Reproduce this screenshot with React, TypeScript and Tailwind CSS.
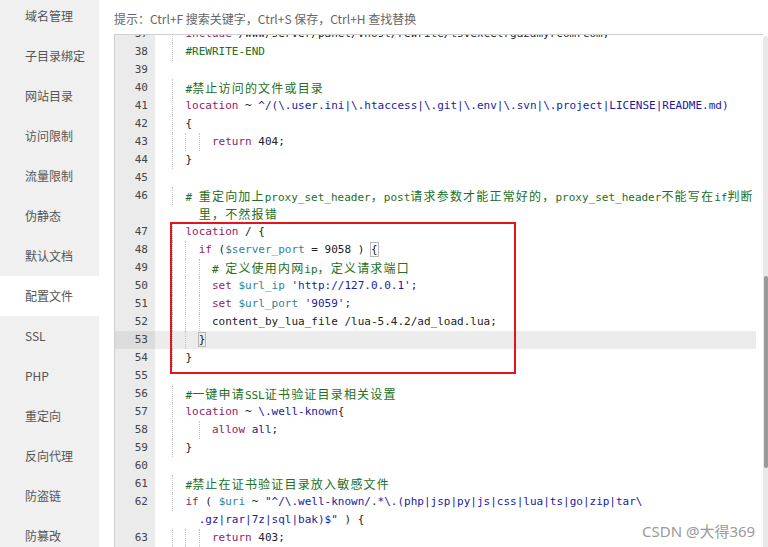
import React from "react";

type Tok = [string, string?];
type Row = { n?: number; indent: number; toks: Tok[]; guides: number[]; active?: boolean };

const COLORS: Record<string, string> = {
  k: "text-[#931a68]",
  c: "text-[#236e24]",
  s: "text-[#1a1aa6]",
  v: "text-[#318495]",
  t: "text-[#222]",
};

const rows: Row[] = [
  { n: 37, indent: 4, toks: [["include", "k"], [" /www/server/panel/vhost/rewrite/tsvexcelrgazdmyrcomrcom;"]], guides: [2] },
  { n: 38, indent: 4, toks: [["#REWRITE-END", "c"]], guides: [2] },
  { n: 39, indent: 0, toks: [], guides: [] },
  { n: 40, indent: 4, toks: [["#禁止访问的文件或目录", "c"]], guides: [2] },
  { n: 41, indent: 4, toks: [["location", "k"], [" ~ "], ["^/(\\.user.ini|\\.htaccess|\\.git|\\.env|\\.svn|\\.project|LICENSE|README.md)", "s"]], guides: [2] },
  { n: 42, indent: 4, toks: [["{"]], guides: [2] },
  { n: 43, indent: 8, toks: [["return", "k"], [" 404;"]], guides: [2, 4, 6] },
  { n: 44, indent: 4, toks: [["}"]], guides: [2] },
  { n: 45, indent: 0, toks: [], guides: [] },
  { n: 46, indent: 4, toks: [["# 重定向加上proxy_set_header，post请求参数才能正常好的，proxy_set_header不能写在if判断", "c"]], guides: [2] },
  { indent: 6, toks: [["里，不然报错", "c"]], guides: [] },
  { n: 47, indent: 4, toks: [["location", "k"], [" / {"]], guides: [2] },
  { n: 48, indent: 6, toks: [["if", "k"], [" ("], ["$server_port", "v"], [" = 9058 ) "], ["{", "b"]], guides: [2, 4] },
  { n: 49, indent: 8, toks: [["# 定义使用内网ip，定义请求端口", "c"]], guides: [2, 4, 6] },
  { n: 50, indent: 8, toks: [["set", "k"], [" "], ["$url_ip", "v"], [" "], ["'http://127.0.0.1'", "s"], [";"]], guides: [2, 4, 6] },
  { n: 51, indent: 8, toks: [["set", "k"], [" "], ["$url_port", "v"], [" "], ["'9059'", "s"], [";"]], guides: [2, 4, 6] },
  { n: 52, indent: 8, toks: [["content_by_lua_file /lua-5.4.2/ad_load.lua;"]], guides: [2, 4, 6] },
  { n: 53, indent: 6, toks: [["}", "b"]], guides: [2, 4], active: true },
  { n: 54, indent: 4, toks: [["}"]], guides: [2] },
  { n: 55, indent: 0, toks: [], guides: [] },
  { n: 56, indent: 4, toks: [["#一键申请SSL证书验证目录相关设置", "c"]], guides: [2] },
  { n: 57, indent: 4, toks: [["location", "k"], [" ~ "], ["\\.well-known", "s"], ["{"]], guides: [2] },
  { n: 58, indent: 8, toks: [["allow", "k"], [" "], ["all", "s"], [";"]], guides: [2, 6] },
  { n: 59, indent: 4, toks: [["}"]], guides: [2] },
  { n: 60, indent: 0, toks: [], guides: [] },
  { n: 61, indent: 4, toks: [["#禁止在证书验证目录放入敏感文件", "c"]], guides: [2] },
  { n: 62, indent: 4, toks: [["if", "k"], [" ( "], ["$uri", "v"], [" ~ "], ["\"^/\\.well-known/.*\\.(php|jsp|py|js|css|lua|ts|go|zip|tar\\", "s"]], guides: [2] },
  { indent: 6, toks: [[".gz|rar|7z|sql|bak)$\"", "s"], [" ) {"]], guides: [] },
  { n: 63, indent: 8, toks: [["return", "k"], [" 403;"]], guides: [2, 4, 6] },
  { n: 64, indent: 4, toks: [["}"]], guides: [2] },
];

const CW = 6.6;
const isWide = (ch: string) => /[\u2e80-\u9fff\uff00-\uffef\u3000-\u303f]/.test(ch);

function renderText(text: string, key: string) {
  const out: React.ReactNode[] = [];
  let buf = "";
  let i = 0;
  for (const ch of text) {
    if (isWide(ch)) {
      if (buf) {
        out.push(<span key={key + "-" + i++}>{buf}</span>);
        buf = "";
      }
      out.push(
        <span
          key={key + "-" + i++}
          className="inline-block w-[13.2px] text-[12px] leading-[18px] font-['Noto_Sans_CJK_SC',sans-serif]"
        >
          {ch}
        </span>
      );
    } else {
      buf += ch;
    }
  }
  if (buf) out.push(<span key={key + "-" + i++}>{buf}</span>);
  return out;
}

const sideItems = ["域名管理", "子目录绑定", "网站目录", "访问限制", "流量限制", "伪静态", "默认文档", "配置文件", "SSL", "PHP", "重定向", "反向代理", "防盗链", "防篡改"];

export default function App() {
  return (
    <div className="relative flex h-[547px] w-[768px] overflow-hidden bg-white">
      {/* sidebar */}
      <div className="w-[99px] shrink-0 overflow-hidden bg-[#f0f0f0]">
        <div className="-mt-[4px]">
          {sideItems.map((s) => (
            <div
              key={s}
              className={
                "flex h-[40px] items-center pl-[25px] text-[12px] text-[#555] font-['Noto_Sans_CJK_SC','Noto_Sans',sans-serif] " +
                (s === "配置文件" ? "bg-white" : "")
              }
            >
              {s}
            </div>
          ))}
        </div>
      </div>

      {/* main */}
      <div className="flex min-w-0 flex-1 flex-col pl-[15px]">
        <div className="flex h-[34px] shrink-0 items-center pt-[4px] text-[12px] text-[#666] font-['Noto_Sans_CJK_SC',sans-serif]">
          提示：Ctrl+F 搜索关键字，Ctrl+S 保存，Ctrl+H 查找替换
        </div>
        <div className="flex min-h-0 flex-1">
          <div className="flex min-w-0 flex-1 overflow-hidden border-l border-t border-[#cfcfcf]">
            <div className="flex-1 overflow-hidden">
              <div className="-mt-[10px] font-['DejaVu_Sans_Mono',monospace] text-[11px] text-[#222]">
                {rows.map((r, idx) => (
                  <div key={idx} className="flex h-[18px] leading-[18px]">
                    <div
                      className={
                        "w-[40px] shrink-0 pr-[7px] text-right text-[#444] " +
                        (r.active ? "bg-[#dcdcdc]" : "bg-[#ebebeb]")
                      }
                    >
                      {r.n ?? ""}
                    </div>
                    <div className={"relative flex-1 whitespace-pre pl-[4px] " + (r.active ? "bg-[#ececec]" : "")}>
                      {r.guides.map((g) => (
                        <span
                          key={g}
                          className="absolute top-0 bottom-0 w-0 border-l border-dotted border-[#c4c4c4]"
                          style={{ left: 4 + g * CW }}
                        />
                      ))}
                      <span>{" ".repeat(r.indent)}</span>
                      {r.toks.map((t, ti) =>
                        t[1] === "b" ? (
                          <span key={ti} className="outline outline-1 outline-[#b8b8b8]">
                            {t[0]}
                          </span>
                        ) : (
                          <span key={ti} className={COLORS[t[1] ?? "t"]}>
                            {renderText(t[0], idx + "-" + ti)}
                          </span>
                        )
                      )}
                    </div>
                  </div>
                ))}
              </div>
            </div>
            <div className="w-[7px] shrink-0 bg-white" />
          </div>
          {/* scrollbar */}
          <div className="flex w-[5px] shrink-0 flex-col pt-[2px]">
            <div className="flex flex-1 flex-col rounded-t-[3px] bg-[#e9e9e9]">
              <div className="h-[240px] shrink-0" />
              <div className="ml-[1px] h-[192px] w-[4px] rounded-[3px] bg-[#999]" />
            </div>
          </div>
        </div>
      </div>

      {/* red highlight box */}
      <div className="pointer-events-none absolute left-[170px] top-[222px] h-[152px] w-[346px] border-2 border-[#e8141c]" />

      {/* watermark */}
      <div className="pointer-events-none absolute left-[642px] top-[520px] text-[15px] text-[#9a9a9a] font-['Noto_Sans','Noto_Sans_CJK_SC',sans-serif]">
        CSDN @大得369
      </div>
    </div>
  );
}
